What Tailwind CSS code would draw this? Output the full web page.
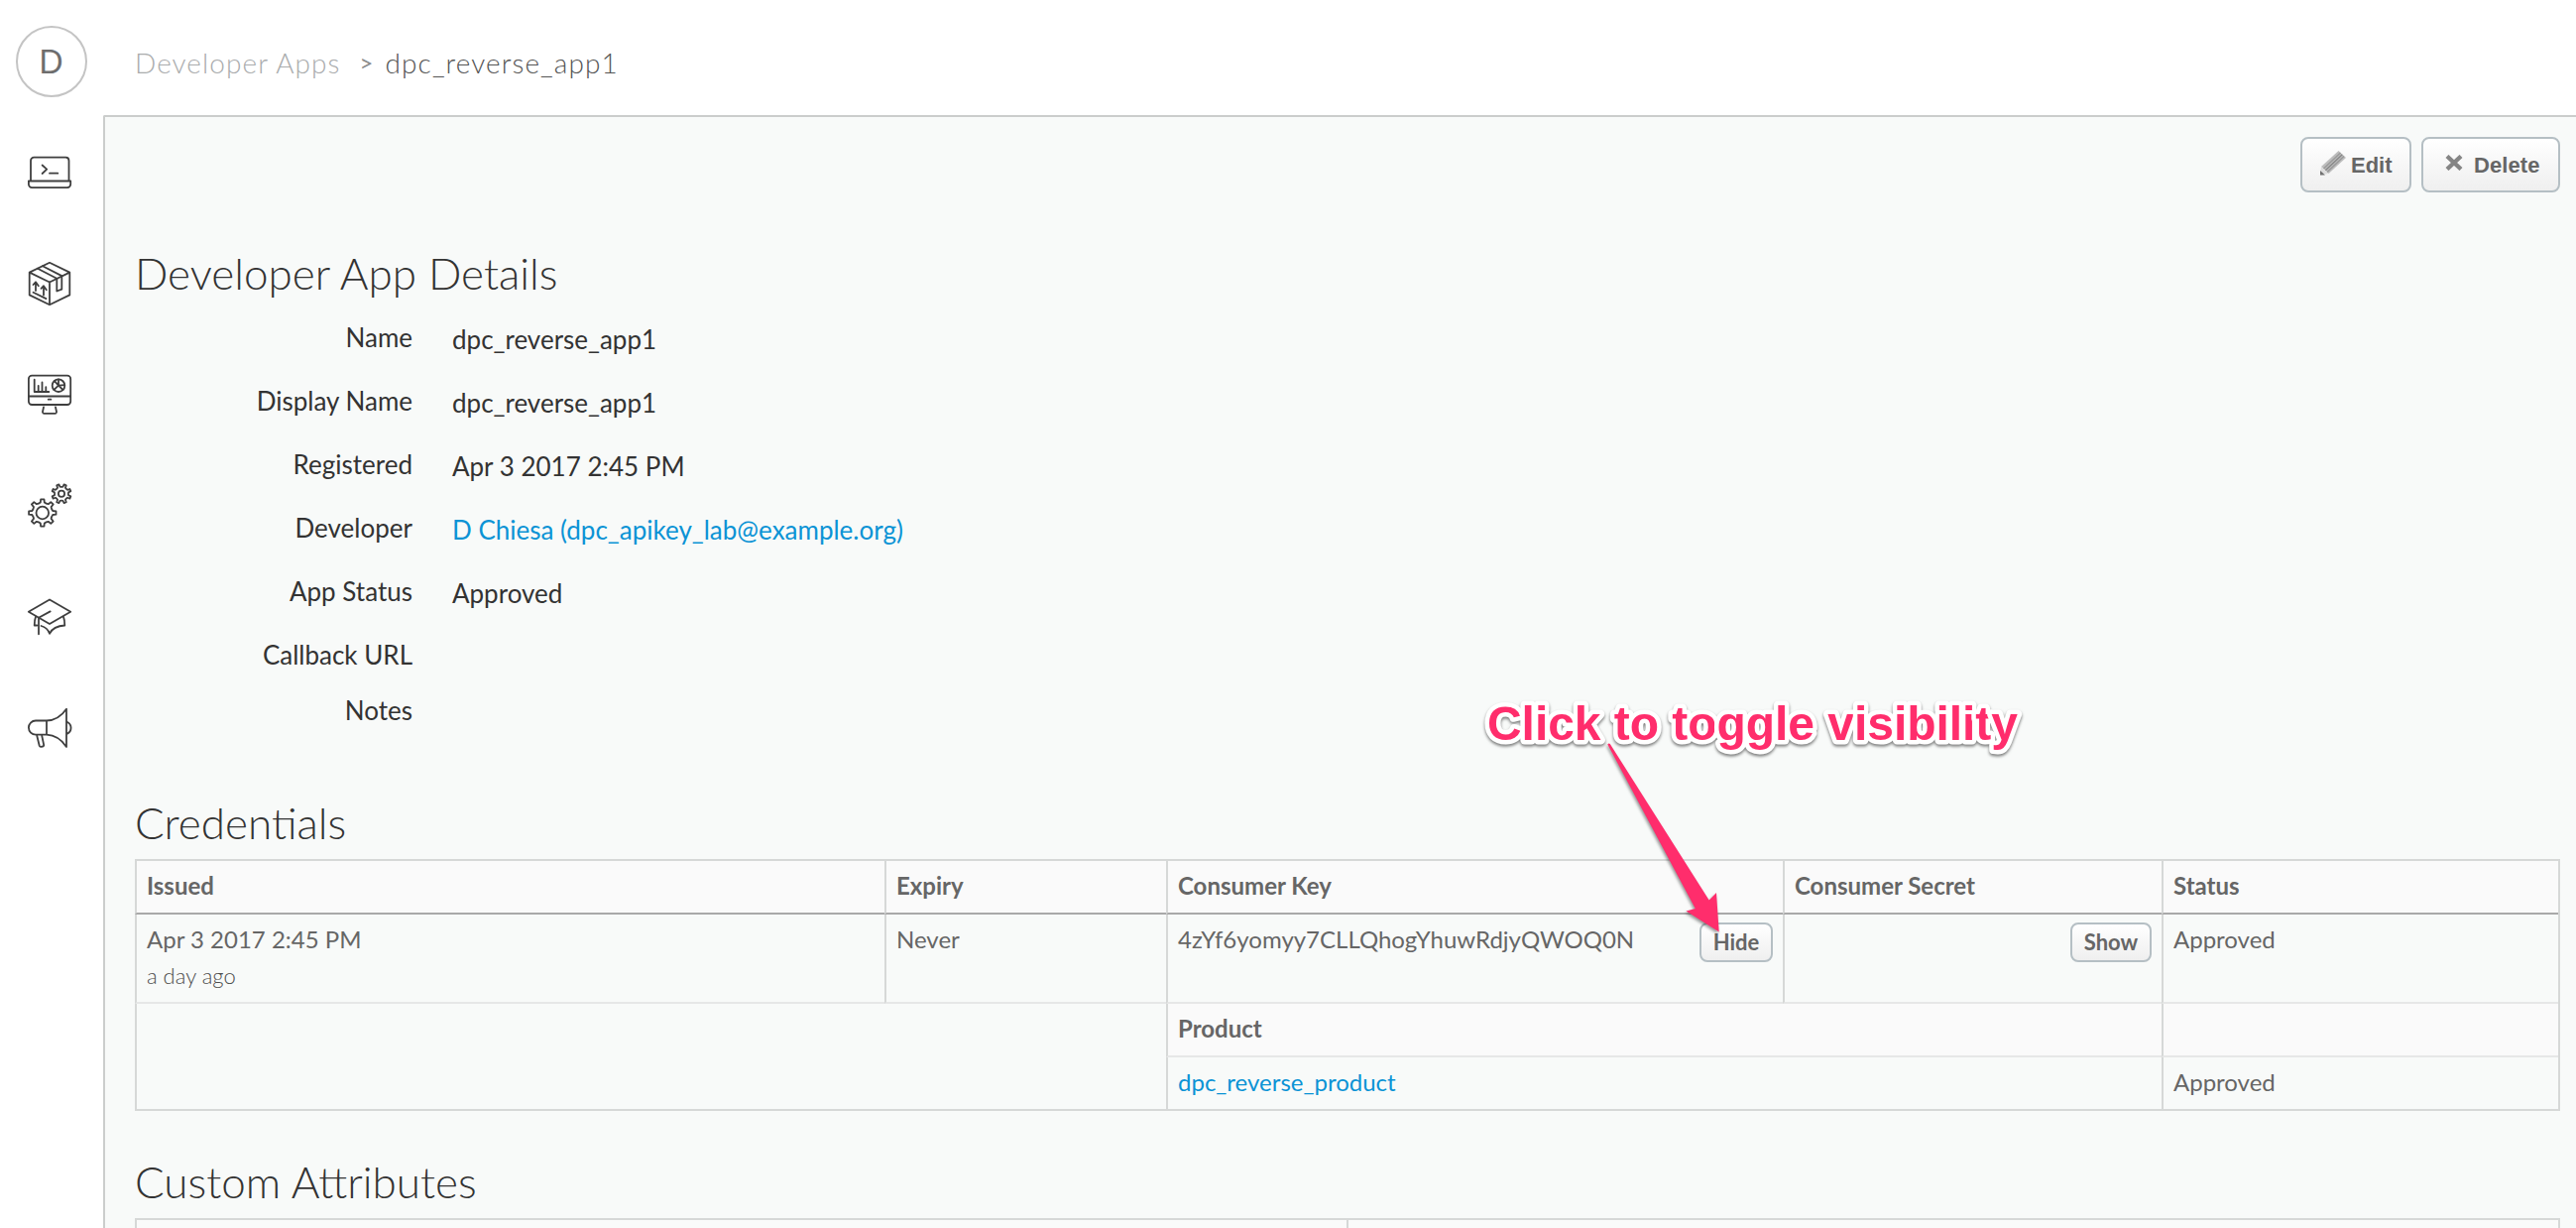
<!DOCTYPE html>
<html lang="en">
<head>
<meta charset="utf-8">
<title>dpc_reverse_app1</title>
<script src="https://cdn.jsdelivr.net/npm/@tailwindcss/browser@4"></script>
</head>
<body class="relative flex h-[1238px] w-[2598px] overflow-hidden bg-white font-['Lato',sans-serif] text-[#333]">

<nav class="flex w-[104px] shrink-0 flex-col pt-[26px]">
  <div class="ml-4 flex size-[72px] items-center justify-center rounded-full border-2 border-[#c4c4c4] pr-px text-[32px] text-[#6e6e6e]">D</div>
  <div class="mt-[52px] ml-[26px] flex flex-col gap-16 text-[#3f3f3f]">
    <!-- API proxies -->
    <svg class="size-12" viewBox="0 0 48 48" fill="none" stroke="currentColor" stroke-width="1.8" stroke-linecap="round" stroke-linejoin="round">
      <path d="M5 32V12a3.3 3.3 0 0 1 3.3-3.3h32A3.3 3.3 0 0 1 43.5 12v20"/>
      <path d="M2.9 32.5h42.3v3.3a3.3 3.3 0 0 1-3.3 3.3H6.2a3.3 3.3 0 0 1-3.3-3.3z"/>
      <path d="M16.6 16.5l4.6 4.2-4.6 4.3M24 24.7h8.3"/>
    </svg>
    <!-- Products -->
    <svg class="size-12" viewBox="0 0 48 48" fill="none" stroke="currentColor" stroke-width="1.8" stroke-linecap="round" stroke-linejoin="round">
      <path d="M24 2.8l20.3 9.8v22.8L24 45.2 3.7 35.4V12.6zM3.7 12.6L24 22.5l20.3-9.9M24 22.5v22.7"/>
      <path d="M17 6.2l19.3 9.9v13.6l-5 1.8V18.7L12 8.8"/>
      <path d="M10 31v-8.500M7.500 25l2.500-2.700 2.800 4M18 35.500v-8.800M15.500 28.800l2.500-2.600 2.800 4M7.500 32.800l13 6.300"/>
    </svg>
    <!-- Analytics -->
    <svg class="size-12" viewBox="0 0 48 48" fill="none" stroke="currentColor" stroke-width="1.8" stroke-linecap="round" stroke-linejoin="round">
      <rect x="2.900" y="4.600" width="42.300" height="29.400" rx="3.300"/>
      <path d="M2.900 25.500h42.300M22.700 28.700h2.700M18 36.500l-1 4.500a1.500 1.500 0 0 0 1.500 1.800h11a1.500 1.500 0 0 0 1.500-1.800l-1-4.500"/>
      <path d="M8.700 8.700V21h14.600M12.700 20.500v-5.700M16.500 20.500v-9M20.300 20.500v-4.300"/>
      <circle cx="33" cy="14.700" r="6.300"/>
      <path d="M33 8.500v6.200l6.200-.6M33 14.700l4.500 4.300M33 14.700L28.300 19M33 14.700l-4-4.500"/>
    </svg>
    <!-- Admin -->
    <svg class="size-12" viewBox="0 0 48 48" fill="none" stroke="currentColor" stroke-width="1.8" stroke-linecap="round" stroke-linejoin="round">
      <circle cx="16.800" cy="31" r="6.300"/>
      <path data-gear="16.8,31,13.8,10.6,0"/>
      <circle cx="36" cy="11.800" r="3.100"/>
      <path data-gear="36,11.8,9.7,7.2,22.5"/>
    </svg>
    <!-- Learn -->
    <svg class="size-12" viewBox="0 0 48 48" fill="none" stroke="currentColor" stroke-width="1.8" stroke-linecap="round" stroke-linejoin="round">
      <path d="M24 6.500l21.200 12.200L24 31 2.800 18.700z"/>
      <path d="M24.700 18.400L13 24.700v16.600M10 23.800c-1 2.500-1.300 5.500-1.300 8.700h2.600M15.500 33c4 1 7 3.500 8.500 7.800 2.500-5 7.500-8 15.300-8.300 0-3.200-.3-6.200-1.300-8.700"/>
    </svg>
    <!-- Announcements -->
    <svg class="size-12" viewBox="0 0 48 48" fill="none" stroke="currentColor" stroke-width="1.8" stroke-linecap="round" stroke-linejoin="round">
      <path d="M21 16.500H10a7.100 7.100 0 0 0 0 14.200h11zM21 16.500c8-.3 15-4.500 20-11.800v38.200c-5-7.300-12-11.800-20-12.200M42 18a6.500 6.500 0 0 1 0 11.600"/>
      <path d="M11.200 31.500l2.500 10.300a1.500 1.500 0 0 0 1.500 1l2-.3a1.200 1.200 0 0 0 1-1.400l-2-9.600"/>
    </svg>
  </div>
</nav>

<div class="flex min-w-0 grow flex-col">
  <header class="flex h-[116px] shrink-0 items-start pt-[43px] pl-8 text-[28px] leading-10 font-light tracking-[1.07px]">
    <a class="text-[#aaacad]">Developer Apps</a>
    <span class="ml-[19px] text-[24px] leading-10 font-normal text-[#8a8a8a]">&gt;</span>
    <span class="ml-[11px] text-[#555]">dpc_reverse_app1</span>
  </header>

  <main class="grow rounded-tl-[2px] border-t-2 border-l-2 border-[#cbcdcc] bg-[#f8faf9] pt-5 pr-4 pl-[30px]">
    <div class="flex justify-end gap-2.5 font-['Liberation_Sans',sans-serif] text-[22px] font-bold text-[#666]">
      <button class="flex h-14 w-28 items-center rounded-lg border-2 border-[#b5bfc4] bg-linear-to-b from-white to-[#efefef] pl-[18px]">
        <svg class="mr-[5px] mb-1 h-[26px] w-[26px] shrink-0" viewBox="0 0 26 26">
          <path d="M18.500 1L26 8 8.500 24 1 17z" fill="#bdbdbd"/>
          <path d="M20.500 3L3.500 19M24 6.500L7 22.500" stroke="#9a9a9a" stroke-width="1.600"/>
          <path d="M22.300 4.700L5.300 20.700" stroke="#858585" stroke-width="1.300"/>
          <path d="M1 17l7.500 7L0 25.500z" fill="#ddd"/>
          <path d="M0 21l5 4.500H0z" fill="#707070"/>
        </svg>Edit
      </button>
      <button class="flex h-14 w-[140px] items-center rounded-lg border-2 border-[#b5bfc4] bg-linear-to-b from-white to-[#efefef] pl-[22px] tracking-[0.1px]">
        <svg class="mr-[11px] mb-1 h-4 w-[18px] shrink-0" viewBox="0 0 18 16"><path d="M2 1.500l14 13M16 1.500l-14 13" stroke="#858585" stroke-width="4.300"/></svg>Delete
      </button>
    </div>

    <h2 class="mt-[51px] text-[44px] leading-[60px] font-light">Developer App Details</h2>
    <dl class="mt-[15px] grid grid-cols-[280px_1fr] grid-rows-[repeat(5,64px)_56px_56px] gap-x-10 text-[26px] leading-10">
      <dt class="text-right">Name</dt><dd class="pt-0.5">dpc_reverse_app1</dd>
      <dt class="text-right">Display Name</dt><dd class="pt-0.5">dpc_reverse_app1</dd>
      <dt class="text-right">Registered</dt><dd class="pt-0.5">Apr 3 2017 2:45 PM</dd>
      <dt class="text-right">Developer</dt><dd class="pt-0.5 text-[#0b93d5]">D Chiesa (dpc_apikey_lab@example.org)</dd>
      <dt class="text-right">App Status</dt><dd class="pt-0.5">Approved</dd>
      <dt class="text-right">Callback URL</dt><dd></dd>
      <dt class="text-right">Notes</dt><dd></dd>
    </dl>

    <h2 class="mt-[47px] text-[44px] leading-[60px] font-light">Credentials</h2>
    <table class="mt-[7px] w-[2446px] table-fixed border-separate border-spacing-0 border-t-2 border-r-2 border-[#d6d8d7] text-left text-2xl leading-8 text-[#666]">
      <colgroup><col class="w-[756px]"><col class="w-[284px]"><col class="w-[622px]"><col class="w-[382px]"><col class="w-[400px]"></colgroup>
      <tr class="h-[54px] bg-[#fafafa] align-top font-bold">
        <th class="border-b-2 border-l-2 border-b-[#a9a9a9] border-l-[#d6d8d7] px-2.5 pt-[9px]">Issued</th>
        <th class="border-b-2 border-l-2 border-b-[#a9a9a9] border-l-[#d6d8d7] px-2.5 pt-[9px]">Expiry</th>
        <th class="border-b-2 border-l-2 border-b-[#a9a9a9] border-l-[#d6d8d7] px-2.5 pt-[9px]">Consumer Key</th>
        <th class="border-b-2 border-l-2 border-b-[#a9a9a9] border-l-[#d6d8d7] px-2.5 pt-[9px]">Consumer Secret</th>
        <th class="border-b-2 border-l-2 border-b-[#a9a9a9] border-l-[#d6d8d7] px-2.5 pt-[9px]">Status</th>
      </tr>
      <tr class="h-[90px] align-top">
        <td class="border-b-2 border-l-2 border-b-[#e6e7e7] border-l-[#d6d8d7] px-2.5 pt-[9px]">Apr 3 2017 2:45 PM<div class="pt-px text-[22px] leading-10 font-light text-[#4d4d4d]">a day ago</div></td>
        <td class="border-b-2 border-l-2 border-b-[#e6e7e7] border-l-[#d6d8d7] px-2.5 pt-[9px]">Never</td>
        <td class="border-b-2 border-l-2 border-b-[#e6e7e7] border-l-[#d6d8d7] px-2.5 pt-2">
          <div class="flex items-start justify-between"><span class="pt-px">4zYf6yomyy7CLLQhogYhuwRdjyQWOQ0N</span><button class="h-10 w-[74px] rounded-lg border-2 border-[#b5bfc4] bg-linear-to-b from-white to-[#efefef] text-[22px] font-bold">Hide</button></div>
        </td>
        <td class="border-b-2 border-l-2 border-b-[#e6e7e7] border-l-[#d6d8d7] px-2.5 pt-2">
          <div class="flex items-start justify-end"><button class="h-10 w-[82px] rounded-lg border-2 border-[#b5bfc4] bg-linear-to-b from-white to-[#efefef] text-[22px] font-bold">Show</button></div>
        </td>
        <td class="border-b-2 border-l-2 border-b-[#e6e7e7] border-l-[#d6d8d7] px-2.5 pt-[9px]">Approved</td>
      </tr>
      <tr class="h-[54px] align-top">
        <td colspan="2" rowspan="2" class="border-b-2 border-l-2 border-[#d6d8d7]"></td>
        <th colspan="2" class="border-b-2 border-l-2 border-b-[#e6e7e7] border-l-[#d6d8d7] bg-[#fafafa] px-2.5 pt-[9px] font-bold">Product</th>
        <th class="border-b-2 border-l-2 border-b-[#e6e7e7] border-l-[#d6d8d7] bg-[#fafafa]"></th>
      </tr>
      <tr class="h-[54px] align-top">
        <td colspan="2" class="border-b-2 border-l-2 border-[#d6d8d7] px-2.5 pt-[9px] text-[#0b93d5]">dpc_reverse_product</td>
        <td class="border-b-2 border-l-2 border-[#d6d8d7] px-2.5 pt-[9px]">Approved</td>
      </tr>
    </table>

    <h2 class="mt-[41px] text-[44px] leading-[60px] font-light">Custom Attributes</h2>
    <div class="mt-[7px] grid h-14 w-[2446px] grid-cols-[1222px_1fr] border-2 border-[#d6d8d7] bg-[#fafafa]">
      <div class="border-r-2 border-[#d6d8d7]"></div>
    </div>
  </main>
</div>

<!-- Callout pointing at the Hide button -->
<svg class="pointer-events-none absolute top-[680px] left-[1460px] h-[300px] w-[620px]" viewBox="1460 680 620 300">
  <g class="drop-shadow-[0_2px_1.5px_rgba(0,0,0,0.5)]">
    <text x="1500" y="746" textLength="535" class="fill-[#ff2d6c] stroke-white font-['Liberation_Sans',sans-serif] text-[48px] font-bold [paint-order:stroke_fill]" stroke-width="9" stroke-linejoin="round">Click to toggle visibility</text>
  </g>
  <path class="fill-[#ff2d6c] drop-shadow-[-1px_2px_1.5px_rgba(0,0,0,0.4)]" d="M1621.300 750.500Q1622.500 749 1623.800 750L1723.700 907.500 1731 900 1733.700 939.500 1700.500 918.500 1709.800 916z"/>
</svg>

<script>
  // Eight-toothed gear outline: "cx,cy,tip radius,root radius,rotation"
  document.querySelectorAll('[data-gear]').forEach(el => {
    const [cx, cy, R, r, rot] = el.dataset.gear.split(',').map(Number);
    const pt = (rad, deg) => {
      const a = (deg + rot) * Math.PI / 180;
      return (cx + rad * Math.sin(a)).toFixed(2) + ' ' + (cy - rad * Math.cos(a)).toFixed(2);
    };
    let d = '';
    for (let k = 0; k < 360; k += 45) {
      d += (k ? 'L' : 'M') + pt(r, k - 11) + 'L' + pt(R, k - 7) + 'L' + pt(R, k + 7) + 'L' + pt(r, k + 11) + 'Q' + pt(r * 0.93, k + 22.5) + ' ' + pt(r, k + 34);
    }
    el.setAttribute('d', d + 'Z');
  });
</script>
</body>
</html>
